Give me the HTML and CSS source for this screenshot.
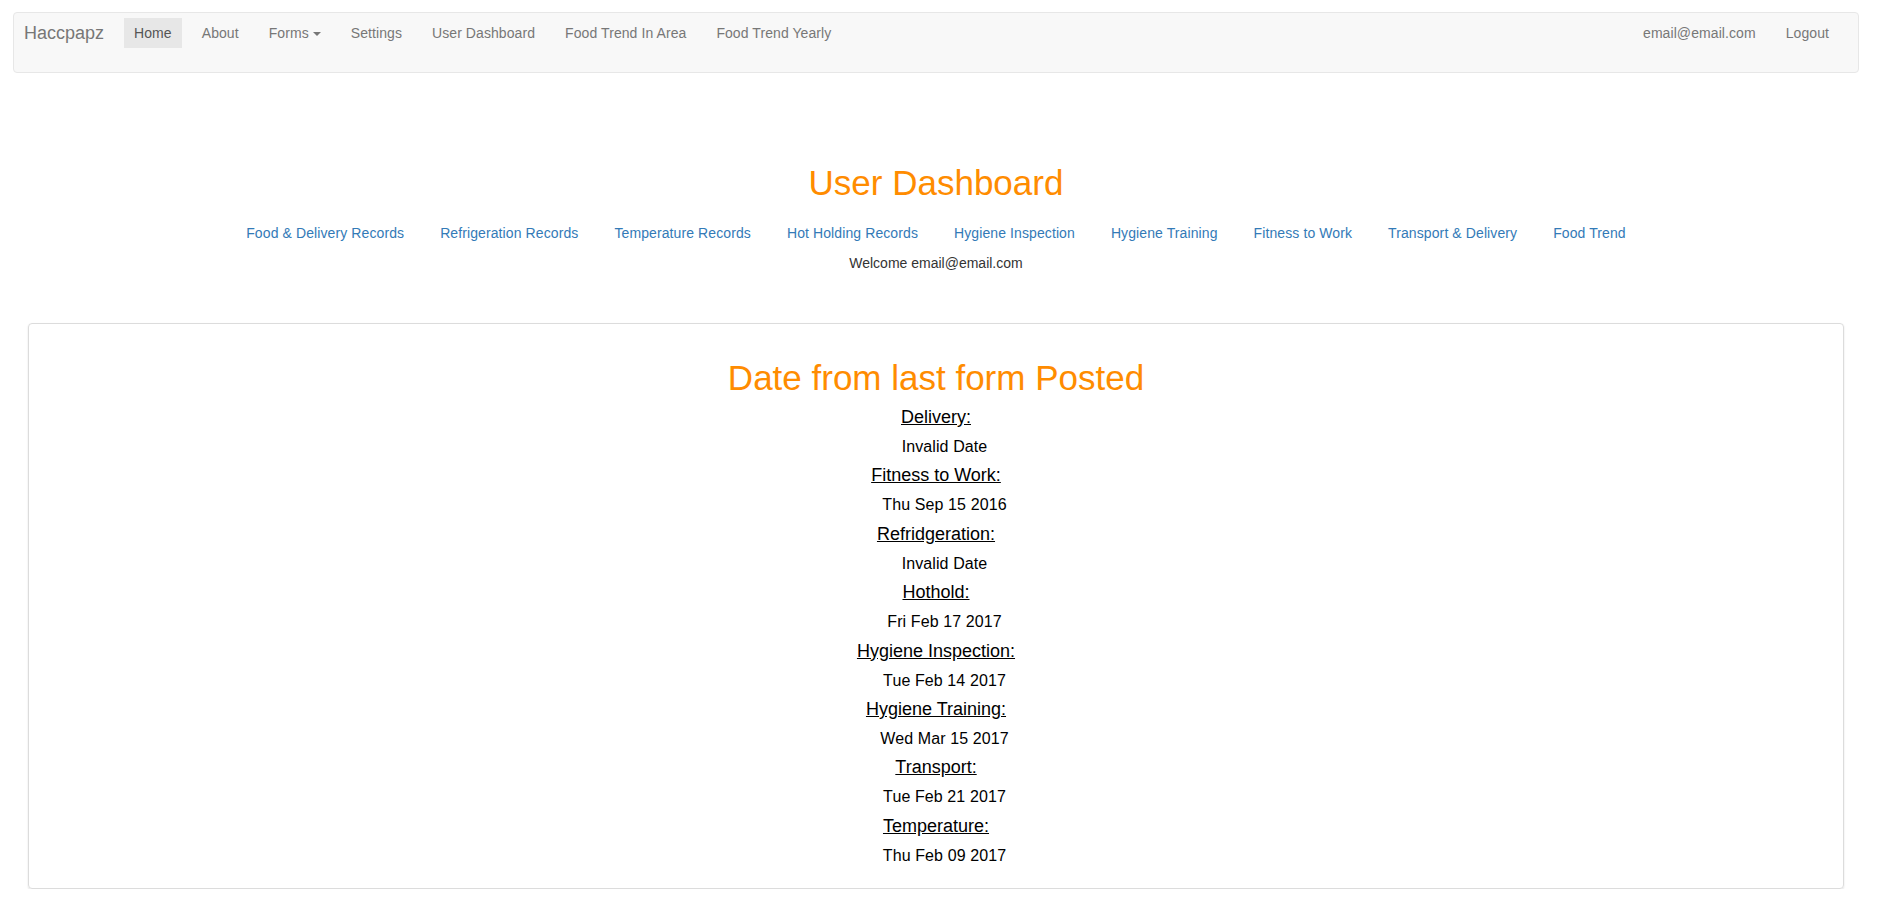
FILE: index.html
```html
<!DOCTYPE html>
<html lang="en">
<head>
<meta charset="utf-8">
<title>Haccpapz - User Dashboard</title>
<link rel="stylesheet" href="styles.css">
</head>
<body>
<div class="page">
  <nav class="navbar">
    <a class="brand" href="#">Haccpapz</a>
    <ul class="nav">
      <li class="active"><a href="#">Home</a></li>
      <li><a href="#">About</a></li>
      <li><a href="#">Forms<span class="caret"></span></a></li>
      <li><a href="#">Settings</a></li>
      <li><a href="#">User Dashboard</a></li>
      <li><a href="#">Food Trend In Area</a></li>
      <li><a href="#">Food Trend Yearly</a></li>
    </ul>
    <ul class="nav nav-right">
      <li><a href="#">email@email.com</a></li>
      <li><a href="#">Logout</a></li>
    </ul>
  </nav>

  <header class="dash-header">
    <h1 class="title">User Dashboard</h1>
    <div class="links">
      <a href="#">Food &amp; Delivery Records</a>
      <a href="#">Refrigeration Records</a>
      <a href="#">Temperature Records</a>
      <a href="#">Hot Holding Records</a>
      <a href="#">Hygiene Inspection</a>
      <a href="#">Hygiene Training</a>
      <a href="#">Fitness to Work</a>
      <a href="#">Transport &amp; Delivery</a>
      <a href="#">Food Trend</a>
    </div>
    <p class="welcome">Welcome email@email.com</p>
  </header>

  <section class="card">
    <h2 class="title card-title">Date from last form Posted</h2>
    <div class="records">
      <div class="label">Delivery:</div>
      <div class="value">Invalid Date</div>
      <div class="label">Fitness to Work:</div>
      <div class="value">Thu Sep 15 2016</div>
      <div class="label">Refridgeration:</div>
      <div class="value">Invalid Date</div>
      <div class="label">Hothold:</div>
      <div class="value">Fri Feb 17 2017</div>
      <div class="label">Hygiene Inspection:</div>
      <div class="value">Tue Feb 14 2017</div>
      <div class="label">Hygiene Training:</div>
      <div class="value">Wed Mar 15 2017</div>
      <div class="label">Transport:</div>
      <div class="value">Tue Feb 21 2017</div>
      <div class="label">Temperature:</div>
      <div class="value">Thu Feb 09 2017</div>
    </div>
  </section>
</div>
</body>
</html>
```

FILE: styles.css
```css
* { box-sizing: border-box; }

html, body {
  margin: 0;
  padding: 0;
  background: #fff;
}

body {
  font-family: "Liberation Sans", Arial, Helvetica, sans-serif;
  font-size: 14px;
  line-height: 20px;
  color: #333;
}

a { text-decoration: none; }

.page {
  padding: 12px 18px 0 13px;
}

/* Navbar */
.navbar {
  display: flex;
  align-items: flex-start;
  height: 61px;
  padding: 5px 14px 0 0;
  background: #f8f8f8;
  border: 1px solid #e7e7e7;
  border-radius: 4px;
}

.brand {
  display: block;
  padding: 0 15px 0 10px;
  font-size: 18px;
  line-height: 30px;
  color: #777;
}

.nav {
  display: flex;
  margin: 0;
  padding: 0;
  list-style: none;
}

.nav li a {
  display: block;
  margin: 0 5px;
  padding: 0 10px;
  line-height: 30px;
  letter-spacing: 0.08px;
  color: #777;
}

.nav li.active a {
  background: #e7e7e7;
  color: #555;
}

.nav-right {
  margin-left: auto;
}

.caret {
  display: inline-block;
  width: 0;
  height: 0;
  margin-left: 4px;
  vertical-align: middle;
  border-top: 4px solid #777;
  border-left: 4px solid transparent;
  border-right: 4px solid transparent;
}

/* Header */
.dash-header {
  margin-top: 90px;
  text-align: center;
}

.title {
  margin: 0;
  font-size: 35px;
  line-height: 40px;
  font-weight: 400;
  color: #ff8c00;
}

.links {
  display: flex;
  justify-content: center;
  gap: 36px;
  margin-top: 20px;
  line-height: 20px;
  letter-spacing: 0.1px;
}

.links a {
  color: #337ab7;
}

.welcome {
  margin: 10px 0 0;
  line-height: 20px;
  color: #333;
}

/* Card */
.card {
  margin: 50px 15px 0;
  padding: 34px 15px 18px;
  border: 1px solid #dcdcdc;
  border-radius: 4px;
  box-shadow: 0 1px 2px rgba(0, 0, 0, 0.12);
  text-align: center;
}

.records {
  display: flex;
  flex-direction: column;
  align-items: center;
  margin-top: 5px;
  color: #000;
}

.label {
  font-size: 18px;
  line-height: 29.1px;
  text-decoration: underline;
}

.value {
  font-size: 16px;
  line-height: 29.3px;
  padding-left: 17px;
  letter-spacing: 0.1px;
}
```
